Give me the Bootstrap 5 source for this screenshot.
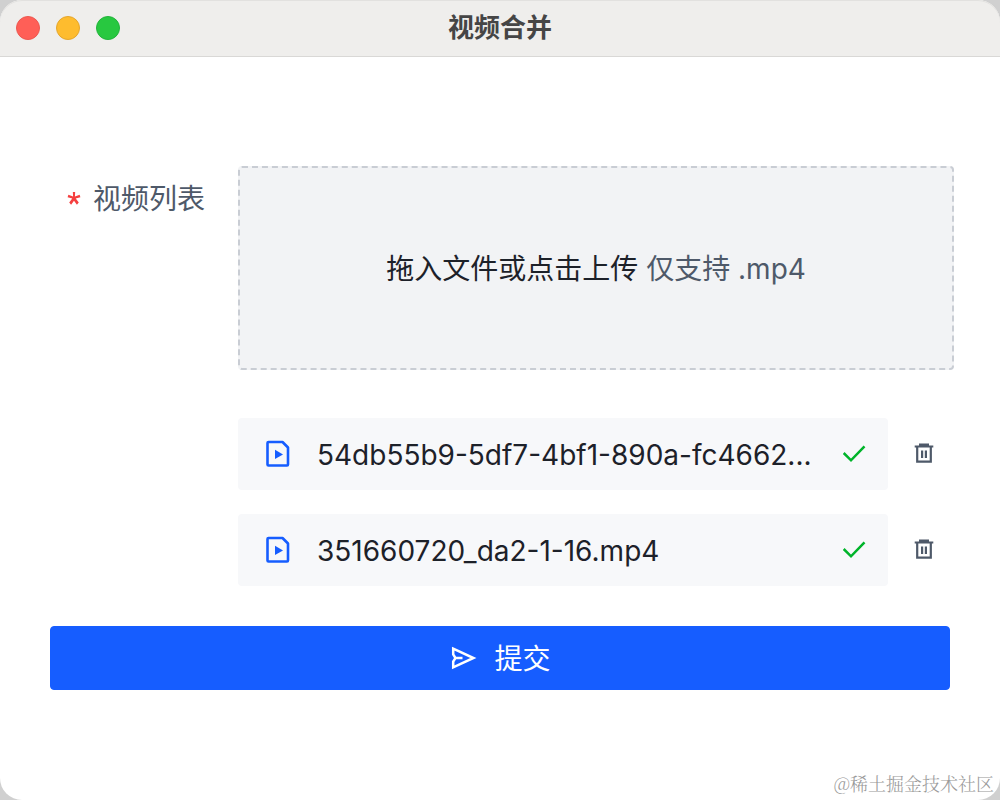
<!DOCTYPE html>
<html lang="zh-CN">
<head>
<meta charset="utf-8">
<meta name="viewport" content="width=device-width, initial-scale=1">
<title>视频合并</title>
<link href="https://cdn.jsdelivr.net/npm/bootstrap@5.3.0/dist/css/bootstrap.min.css" rel="stylesheet">
<style>
  body { background: #d0d0d0; color: #1d2129; font-family: Inter, "Noto Sans CJK SC", sans-serif; font-size: 28px; line-height: 44px; }
  .app-window { border-radius: 22px; }
  .title-bar { height: 57px; background: #efeeec; border-bottom: 1px solid #d9d8d6; border-radius: 22px 22px 0 0; padding: 0 16px; box-shadow: inset 0 1px 0 #e2e1df; }
  .title-bar h1 { font-size: 26px; line-height: 54px; color: #454545; }
  .dots { flex: 1 1 0; gap: 16px; }
  .dot { width: 24px; height: 24px; border: 1px solid; border-radius: 50%; padding: 0; }
  .dot-close { background: #ff5f57; border-color: #ed5850; }
  .dot-min { background: #febc2e; border-color: #e5a62c; }
  .dot-max { background: #28c840; border-color: #22b43b; }
  .video-form { padding: 109px 50px 48px; }
  .form-row { margin-right: -4px; margin-bottom: 40px; }
  .field-label { width: 188px; padding: 11px 33px 0 0; color: #4e5969; }
  .required-mark { width: 14px; height: 14px; margin-right: 12px; fill: #f53f3f; }
  .drop-zone { height: 204px; background: #f2f3f5; border: 2px dashed #c9cdd4; border-radius: 4px; padding-top: 2px; cursor: pointer; gap: 8px; }
  .drop-zone .hint { color: #4e5969; }
  .file-list { margin-top: 48px; gap: 24px; }
  .file-card { height: 72px; background: #f7f8fa; border-radius: 4px; padding: 0 20px 0 24px; }
  .file-card .file-icon { width: 32px; height: 32px; margin-right: 23px; }
  .file-card .file-name { padding-top: 2px; }
  .file-card .check-icon { width: 28px; height: 28px; margin-left: 16px; }
  .delete-btn { width: 66px; color: #4e5969; padding: 0 0 2px 6px; }
  .submit-btn { --bs-btn-bg: #165dff; --bs-btn-border-color: #165dff; --bs-btn-hover-bg: #4080ff; --bs-btn-active-bg: #0e42d2; height: 64px; border-radius: 4px; font-size: 28px; gap: 17px; line-height: 44px; padding: 0; }
  .submit-btn span { padding-top: 2px; }
  .site-mark { right: 6px; bottom: 4px; font: 300 18px/26px "Noto Serif CJK SC", "Liberation Serif", "Noto Sans CJK SC", serif; color: #999; }
</style>
</head>
<body>
<svg class="d-none" aria-hidden="true">
  <symbol id="video-file" viewBox="0 0 32 32">
    <path d="M6.500 4H20.500L26 9.500V26.500a1 1 0 0 1-1 1H6.500A1 1 0 0 1 5.500 26.500V5A1 1 0 0 1 6.500 4Z" fill="none" stroke="#165dff" stroke-width="2.600" stroke-linejoin="round"/>
    <path d="M13 11.800 21 16.400 13 21Z" fill="#165dff"/>
  </symbol>
  <symbol id="check" viewBox="0 0 28 28"><path d="m3.700 13 7.300 7.300L24.500 6.300" fill="none" stroke="#00b42a" stroke-width="2.500"/></symbol>
  <symbol id="trash" viewBox="0 0 24 24"><path d="M2.700 5.500h18.600M7 3.500h10M5.200 5.500V20.700h13.600V5.500M10.100 9.500v7.500M13.900 9.500v7.500" fill="none" stroke="currentColor" stroke-width="2.200"/></symbol>
</svg>
<div class="app-window bg-white min-vh-100 position-relative">
  <header class="title-bar d-flex align-items-center">
    <div class="dots d-flex">
      <button class="dot dot-close" type="button" aria-label="关闭"></button>
      <button class="dot dot-min" type="button" aria-label="最小化"></button>
      <button class="dot dot-max" type="button" aria-label="缩放"></button>
    </div>
    <h1 class="fw-bold m-0">视频合并</h1>
    <div class="dots"></div>
  </header>
  <main>
    <form class="video-form">
      <div class="form-row d-flex">
        <label class="field-label flex-shrink-0 d-flex align-items-center justify-content-end align-self-start text-nowrap" for="videos">
          <svg class="required-mark" viewBox="0 0 12 12" aria-hidden="true"><path d="M5 0h2l-.2 3.900 4-1.500.7 2-4 1.200 2.600 3.500L8.500 11 6 7.400 3.500 11 1.900 9.100l2.600-3.500-4-1.200.7-2 4 1.500Z"/></svg>视频列表
        </label>
        <div class="flex-fill overflow-hidden">
          <input class="visually-hidden" type="file" id="videos" accept=".mp4" multiple>
          <label class="drop-zone d-flex align-items-center justify-content-center" for="videos"><span>拖入文件或点击上传</span><span class="hint">仅支持 .mp4</span></label>
          <ul class="file-list list-unstyled d-flex flex-column mb-0">
            <li class="d-flex">
              <div class="file-card d-flex align-items-center flex-grow-1 overflow-hidden">
                <svg class="file-icon flex-shrink-0"><use href="#video-file"/></svg>
                <span class="file-name text-truncate flex-grow-1">54db55b9-5df7-4bf1-890a-fc4662...</span>
                <svg class="check-icon flex-shrink-0"><use href="#check"/></svg>
              </div>
              <button class="delete-btn btn border-0 flex-shrink-0 d-flex align-items-center justify-content-center" type="button" aria-label="删除"><svg width="24" height="24"><use href="#trash"/></svg></button>
            </li>
            <li class="d-flex">
              <div class="file-card d-flex align-items-center flex-grow-1 overflow-hidden">
                <svg class="file-icon flex-shrink-0"><use href="#video-file"/></svg>
                <span class="file-name text-truncate flex-grow-1">351660720_da2-1-16.mp4</span>
                <svg class="check-icon flex-shrink-0"><use href="#check"/></svg>
              </div>
              <button class="delete-btn btn border-0 flex-shrink-0 d-flex align-items-center justify-content-center" type="button" aria-label="删除"><svg width="24" height="24"><use href="#trash"/></svg></button>
            </li>
          </ul>
        </div>
      </div>
      <button class="submit-btn btn btn-primary w-100 d-flex align-items-center justify-content-center" type="submit">
        <svg width="28" height="28" viewBox="0 0 28 28" fill="none" stroke="#fff" stroke-width="2.500" aria-hidden="true"><path d="M4.200 4.600 24.500 14 4.200 23.400V17.500L6.500 14 4.200 10.500ZM6.500 14H13.500"/></svg><span>提交</span>
      </button>
    </form>
  </main>
  <div class="site-mark position-absolute">@稀土掘金技术社区</div>
</div>
<script src="https://cdn.jsdelivr.net/npm/bootstrap@5.3.0/dist/js/bootstrap.bundle.min.js"></script>
</body>
</html>
